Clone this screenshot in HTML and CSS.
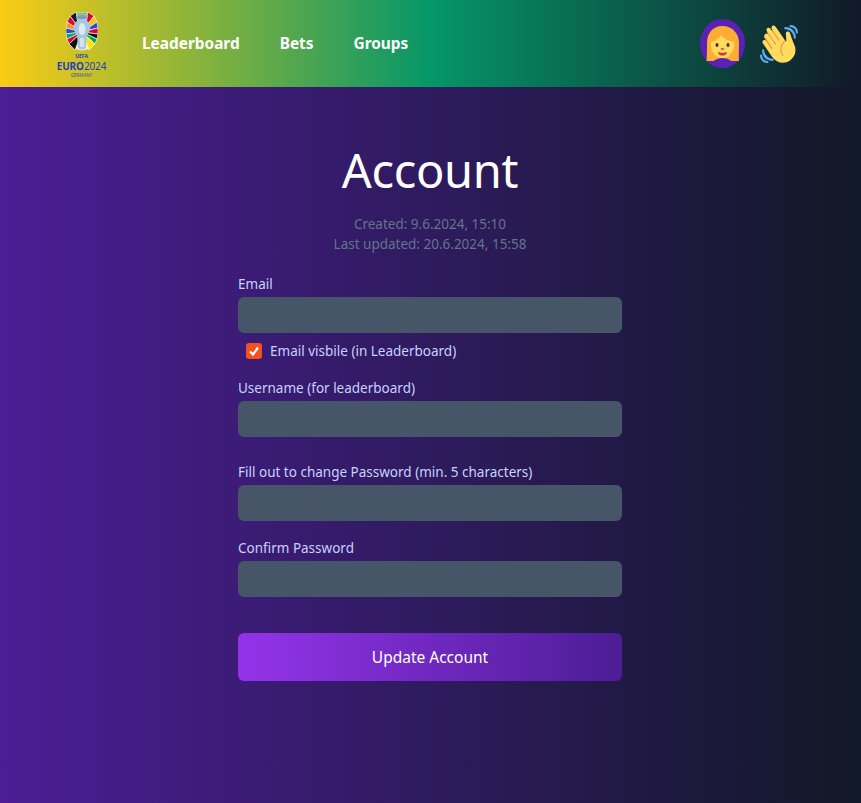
FILE: index.html
```html
<!DOCTYPE html>
<html lang="en">
<head>
    <meta charset="UTF-8">
    <meta name="viewport" content="width=device-width, initial-scale=1.0">
    <title>Account</title>
    <link rel="stylesheet" href="styles.css">
</head>
<body>
    <header class="topbar">
        <div class="logo">
            <svg class="logo-mark" width="32" height="39" viewBox="0 0 32 39">
                <ellipse cx="16" cy="19.500" rx="15.500" ry="19" fill="#f4f4f0"/>
                <g stroke="#f4f4f0" stroke-width="0.700">
                    <path d="M16 20 L10 0 L4 4 Z" fill="#1a1a1a"/>
                    <path d="M16 20 L4 4 L1 10 Z" fill="#e4002b"/>
                    <path d="M16 20 L1 10 L0 16 Z" fill="#f7941d"/>
                    <path d="M16 20 L0 16 L0 22 Z" fill="#1d4ed8"/>
                    <path d="M16 20 L0 22 L1 27 Z" fill="#00a651"/>
                    <path d="M16 20 L1 27 L3 32 Z" fill="#e4002b"/>
                    <path d="M16 20 L3 32 L9 38 Z" fill="#111111"/>
                    <path d="M16 20 L10 0 L22 0 Z" fill="#7cc576"/>
                    <path d="M16 20 L22 0 L28 4 Z" fill="#e4002b"/>
                    <path d="M16 20 L28 4 L31 10 Z" fill="#ffc20e"/>
                    <path d="M16 20 L31 10 L32 16 Z" fill="#1d4ed8"/>
                    <path d="M16 20 L32 16 L32 22 Z" fill="#e4002b"/>
                    <path d="M16 20 L32 22 L31 27 Z" fill="#111111"/>
                    <path d="M16 20 L31 27 L29 32 Z" fill="#00a651"/>
                    <path d="M16 20 L29 32 L23 38 Z" fill="#ffe600"/>
                </g>
                <path d="M10 4 C10 2 22 2 22 4 L21 9 C26 12 25 18 21 23 L20 36 C18 38 14 38 12 36 L11 23 C7 18 6 12 11 9 Z" fill="#a9c6dc"/>
                <ellipse cx="16" cy="5" rx="5" ry="2" fill="#7f9cb2"/>
                <ellipse cx="16" cy="17" rx="3.500" ry="6" fill="#dbe9f3"/>
                <path d="M14 26 H18 V35 H14 Z" fill="#d2e2ee"/>
            </svg>
            <span class="logo-uefa">UEFA</span>
            <span class="logo-euro"><b>EURO</b>2024</span>
            <span class="logo-country">GERMANY</span>
        </div>
        <nav class="nav">
            <a href="#">Leaderboard</a>
            <a href="#">Bets</a>
            <a href="#">Groups</a>
        </nav>
        <div class="topbar-right">
            <svg class="avatar" width="46" height="49" viewBox="0 0 46 49">
                <ellipse cx="22.500" cy="24.500" rx="22.500" ry="24.500" fill="#5b21b6"/>
                <path d="M22.500 7 C12 7 7 15 7 24 C7 31 7 37 6.500 42 L14 42 C18 40 27 40 31 42 L39 42 C38.500 37 39 31 39 24 C39 15 33 7 22.500 7 Z" fill="#ffac33"/>
                <path d="M14 42 C18 38 27 38 31 42 L34 44 C28 48 17 48 11 44 Z" fill="#5b21b6"/>
                <path d="M11 23 C16 22 19 19 21 16 C24 20 29 22 34 23 C35 31 30 39 22.500 39 C15 39 10 31 11 23 Z" fill="#ffdc5d"/>
                <ellipse cx="17" cy="26" rx="1.500" ry="2" fill="#662113"/>
                <ellipse cx="28" cy="26" rx="1.500" ry="2" fill="#662113"/>
                <ellipse cx="22.500" cy="30" rx="2" ry="1" fill="#c1694f"/>
                <path d="M18 33 C20 34 25 34 27 33 C26.500 36 24.500 36.500 22.500 36.500 C20.500 36.500 18.500 36 18 33 Z" fill="#dd2e44"/>
            </svg>
            <svg class="wave" width="38" height="38" viewBox="0 0 36 36">
                <path fill="#EF9645" d="M4.861 9.147c.94-.657 2.357-.531 3.201.166l-.968-1.407c-.779-1.111-.5-2.313.612-3.093 1.112-.777 4.263 1.312 4.263 1.312-.786-1.122-.639-2.544.483-3.331 1.122-.784 2.67-.513 3.456.611l10.42 14.72L25 31l-11.083-4.042L4.25 12.625c-.793-1.129-.519-2.686.611-3.478z"/>
                <path fill="#FFDC5D" d="M2.695 17.336s-1.132-1.65.519-2.781c1.649-1.131 2.78.518 2.78.518l5.251 7.658c.181-.302.379-.6.6-.894L4.557 11.21s-1.131-1.649.519-2.78c1.649-1.131 2.78.518 2.78.518l6.855 9.997c.255-.208.516-.417.785-.622L6.549 5.732s-1.131-1.649.519-2.78c1.649-1.131 2.78.518 2.78.518l7.947 11.589c.292-.179.581-.334.871-.498L11.238 3.729s-1.131-1.649.518-2.78c1.649-1.131 2.78.518 2.78.518l7.854 11.454 1.194 1.742c-4.948 3.394-5.419 9.779-2.592 13.902.565.825 1.39.26 1.39.26-3.393-4.949-2.357-10.51 2.592-13.903L24.515 8.62s-.545-1.924 1.378-2.47c1.924-.545 2.47 1.379 2.47 1.379l1.685 5.004c.668 1.984 1.379 3.961 2.32 5.831 2.657 5.28 1.07 11.842-3.94 15.279-5.465 3.747-12.936 2.354-16.684-3.11L2.695 17.336z"/>
                <path fill="#5DADEC" d="M12 32.042C8 32.042 3.958 28 3.958 24c0-.553-.405-1-.958-1s-1.042.447-1.042 1C1.958 30 6 34.042 12 34.042c.553 0 1-.489 1-1.042s-.447-.958-1-.958z"/>
                <path fill="#5DADEC" d="M7 34c-3 0-5-2-5-5 0-.553-.447-1-1-1s-1 .447-1 1c0 4 3 7 7 7 .553 0 1-.447 1-1s-.447-1-1-1zM24 2c-.552 0-1 .448-1 1s.448 1 1 1c4 0 8 3.589 8 8 0 .552.448 1 1 1s1-.448 1-1c0-5.514-4-10-10-10z"/>
                <path fill="#5DADEC" d="M29 .042c-.552 0-1 .406-1 .958s.448 1.042 1 1.042c3 0 4.958 2.225 4.958 4.958 0 .552.489 1 1.042 1s.958-.448.958-1C35.958 3.163 33 .042 29 .042z"/>
            </svg>
        </div>
    </header>

    <main class="content">
        <h1>Account</h1>
        <p class="meta">Created: 9.6.2024, 15:10<br>Last updated: 20.6.2024, 15:58</p>

        <form class="account-form">
            <div class="field">
                <label for="email">Email</label>
                <input type="text" id="email">
            </div>
            <label class="check-row">
                <input type="checkbox" checked>
                <span class="box"><svg width="12" height="12" viewBox="0 0 12 12"><path d="M2 6.500 L5 9.500 L10 2.500" fill="none" stroke="#fff" stroke-width="2.200"/></svg></span>
                Email visbile (in Leaderboard)
            </label>
            <div class="field field-username">
                <label for="username">Username (for leaderboard)</label>
                <input type="text" id="username">
            </div>
            <div class="field field-password">
                <label for="password">Fill out to change Password (min. 5 characters)</label>
                <input type="password" id="password">
            </div>
            <div class="field field-confirm">
                <label for="confirm">Confirm Password</label>
                <input type="password" id="confirm">
            </div>
            <button type="button">Update Account</button>
        </form>
    </main>
</body>
</html>
```

FILE: styles.css
```css
* {
    box-sizing: border-box;
}
body {
    margin: 0;
    min-height: 803px;
    font-family: "Noto Sans", "Open Sans", sans-serif;
    background: linear-gradient(to right, #4c1d95, #111827);
    color: #ffffff;
}
.topbar {
    display: flex;
    align-items: center;
    height: 87px;
    padding: 0 63px 0 57px;
    background: linear-gradient(to right, #facc15, #059669 50%, #111827);
}
.logo {
    display: flex;
    flex-direction: column;
    align-items: center;
    width: 49px;
    padding-top: 1px;
}
.logo-mark {
    display: block;
}
.logo-uefa {
    height: 9px;
    line-height: 9px;
    font-size: 5px;
    font-weight: 700;
    color: #1d3fb8;
    margin-top: 1px;
}
.logo-euro {
    height: 10px;
    line-height: 10px;
    font-size: 10px;
    color: #1d3fb8;
    letter-spacing: -0.1px;
    white-space: nowrap;
}
.logo-country {
    height: 4px;
    line-height: 4px;
    font-size: 4.500px;
    margin-top: 2px;
    color: #3d55a8;
}
.nav {
    display: flex;
    gap: 40px;
    margin: 0 0 1px 36px;
}
.nav a {
    color: #ffffff;
    font-weight: 700;
    font-size: 15.400px;
    text-decoration: none;
}
.topbar-right {
    display: flex;
    align-items: center;
    gap: 14px;
    margin-left: auto;
}
.avatar,
.wave {
    display: block;
}
.content {
    display: flex;
    flex-direction: column;
    align-items: center;
    padding-right: 1px;
}
h1 {
    margin: 55px 0 0;
    font-size: 47px;
    line-height: 56px;
    font-weight: 400;
    letter-spacing: -0.3px;
}
.meta {
    margin: 16px 0 0;
    text-align: center;
    font-size: 13.500px;
    line-height: 20px;
    color: #64748b;
}
.account-form {
    display: flex;
    flex-direction: column;
    width: 384px;
    margin-top: 20px;
}
.field label {
    display: block;
    font-size: 13.500px;
    line-height: 20px;
    margin-bottom: 3px;
    color: #c7d2fe;
}
.field input {
    display: block;
    width: 100%;
    height: 36px;
    border: none;
    border-radius: 6px;
    background: #475569;
    color: #ffffff;
}
.check-row {
    display: flex;
    align-items: center;
    gap: 8px;
    height: 20px;
    margin: 8px 0 0 8px;
    font-size: 13.500px;
    color: #c7d2fe;
}
.check-row input {
    display: none;
}
.box {
    display: flex;
    align-items: center;
    justify-content: center;
    width: 16px;
    height: 16px;
    border-radius: 3px;
    background: #f4511e;
}
.field-username {
    margin-top: 17px;
}
.field-password {
    margin-top: 25px;
}
.field-confirm {
    margin-top: 17px;
}
button {
    height: 48px;
    margin-top: 36px;
    border: none;
    border-radius: 6px;
    background: linear-gradient(to right, #9333ea, #4c1d95);
    color: #ffffff;
    font-family: inherit;
    font-size: 15.500px;
    cursor: pointer;
}
```
